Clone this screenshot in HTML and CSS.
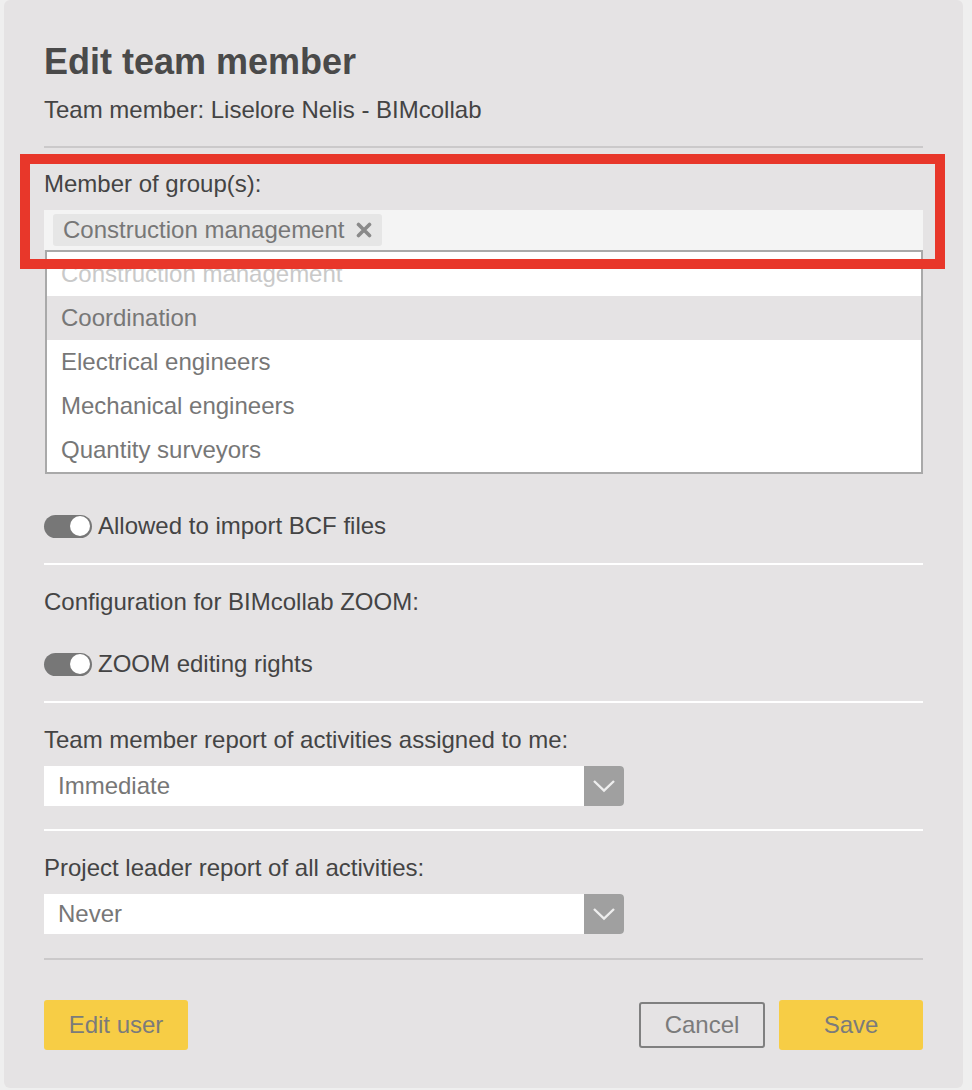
FILE: index.html
```html
<!DOCTYPE html>
<html lang="en">
<head>
  <meta charset="UTF-8" />
  <meta name="viewport" content="width=device-width, initial-scale=1.0"/>
  <title>Edit team member</title>
  <link rel="stylesheet" href="styles.css">
</head>
<body>
  <div class="panel">
    <h1 class="title">Edit team member</h1>
    <div class="subtitle">Team member: Liselore Nelis - BIMcollab</div>
    <div class="divider grey"></div>

    <div class="field-label first">Member of group(s):</div>
    <div class="multi-select">
      <span class="tag">Construction management
        <svg class="tag-remove" width="16" height="16" viewBox="0 0 16 16"><path d="M2.5 2.5 L13.5 13.5 M13.5 2.5 L2.5 13.5" stroke="#8a8a8a" stroke-width="3.6" stroke-linecap="round"/></svg>
      </span>
    </div>
    <ul class="options">
      <li class="option selected">Construction management</li>
      <li class="option hover">Coordination</li>
      <li class="option">Electrical engineers</li>
      <li class="option">Mechanical engineers</li>
      <li class="option">Quantity surveyors</li>
    </ul>

    <label class="toggle-row import-row">
      <span class="toggle"><span class="knob"></span></span>
      Allowed to import BCF files
    </label>
    <div class="divider white"></div>

    <div class="field-label">Configuration for BIMcollab ZOOM:</div>
    <label class="toggle-row zoom-row">
      <span class="toggle"><span class="knob"></span></span>
      ZOOM editing rights
    </label>
    <div class="divider white"></div>

    <div class="field-label">Team member report of activities assigned to me:</div>
    <div class="select">
      <span class="select-value">Immediate</span>
      <span class="select-arrow">
        <svg width="24" height="14" viewBox="0 0 24 14"><path d="M2 2 L12 11.5 L22 2" fill="none" stroke="#eeeeee" stroke-width="2.4"/></svg>
      </span>
    </div>
    <div class="divider white"></div>

    <div class="field-label">Project leader report of all activities:</div>
    <div class="select">
      <span class="select-value">Never</span>
      <span class="select-arrow">
        <svg width="24" height="14" viewBox="0 0 24 14"><path d="M2 2 L12 11.5 L22 2" fill="none" stroke="#eeeeee" stroke-width="2.4"/></svg>
      </span>
    </div>
    <div class="divider grey last"></div>

    <div class="actions">
      <button class="btn yellow edit-btn">Edit user</button>
      <div class="actions-right">
        <button class="btn outline">Cancel</button>
        <button class="btn yellow save-btn">Save</button>
      </div>
    </div>

    <!-- annotation box drawn over the group field -->
    <div class="highlight-box"></div>
  </div>
</body>
</html>
```

FILE: styles.css
```css
body, html {
  margin: 0;
  padding: 0;
  background: #efefef;
  font-family: "Liberation Sans", Arial, Helvetica, sans-serif;
}

.panel {
  position: relative;
  margin-left: 4px;
  width: 959px;
  height: 1088px;
  box-sizing: border-box;
  padding: 42px 40px 0;
  background: #e5e3e4;
  border-radius: 6px;
  color: #444;
}

.title {
  margin: 0;
  font-size: 36px;
  line-height: 40px;
  font-weight: bold;
  color: #4a4a4a;
}

.subtitle {
  margin-top: 14px;
  font-size: 24px;
  line-height: 28px;
}

.divider {
  height: 2px;
  margin-top: 23px;
}

.divider.grey {
  background: #cbc9ca;
  margin-top: 22px;
}

.divider.last {
  margin-top: 24px;
}

.divider.white {
  background: #ffffff;
}

.field-label {
  margin-top: 23px;
  font-size: 24px;
  line-height: 28px;
}

.field-label.first {
  margin-top: 22px;
}

/* multi select */
.multi-select {
  margin-top: 12px;
  height: 40px;
  box-sizing: border-box;
  padding: 4px 9px;
  background: #f4f4f4;
}

.tag {
  display: inline-flex;
  align-items: center;
  height: 32px;
  padding: 0 10px;
  background: #e6e6e6;
  border-radius: 3px;
  font-size: 24px;
  color: #777;
}

.tag-remove {
  margin-left: 12px;
}

.options {
  list-style: none;
  margin: 0 0 0 1px;
  padding: 0;
  border: 2px solid #a9a9a9;
  background: #fff;
}

.option {
  height: 44px;
  line-height: 44px;
  padding-left: 14px;
  font-size: 24px;
  color: #777;
}

.option.selected {
  color: #c9c9c9;
}

.option.hover {
  background: #e5e3e4;
}

/* toggles */
.toggle-row {
  display: flex;
  align-items: center;
  height: 28px;
  font-size: 24px;
  margin-top: 34px;
}

.toggle-row.import-row {
  margin-top: 38px;
}

.toggle {
  position: relative;
  flex: none;
  width: 48px;
  height: 23px;
  margin-right: 6px;
  border-radius: 12px;
  background: #777;
}

.knob {
  position: absolute;
  top: 1.5px;
  right: 2px;
  width: 20px;
  height: 20px;
  border-radius: 50%;
  background: #fff;
}

/* selects */
.select {
  display: flex;
  margin-top: 12px;
  width: 580px;
  height: 40px;
  background: #fff;
  border-radius: 0 4px 4px 0;
}

.select-value {
  flex: 1;
  padding-left: 14px;
  line-height: 40px;
  font-size: 24px;
  color: #777;
}

.select-arrow {
  display: flex;
  align-items: center;
  justify-content: center;
  width: 40px;
  background: #a0a0a0;
  border-radius: 0 4px 4px 0;
}

/* buttons */
.actions {
  display: flex;
  justify-content: space-between;
  align-items: center;
  margin-top: 40px;
}

.actions-right {
  display: flex;
  align-items: center;
  gap: 14px;
}

.btn {
  height: 50px;
  border: none;
  border-radius: 3px;
  font-family: "Liberation Sans", Arial, Helvetica, sans-serif;
  font-size: 24px;
  color: #7b7b7b;
  cursor: pointer;
}

.btn.yellow {
  background: #f7cd45;
}

.edit-btn {
  width: 144px;
}

.save-btn {
  width: 144px;
}

.btn.outline {
  width: 126px;
  height: 46px;
  background: transparent;
  border: 2px solid #808080;
}

.highlight-box {
  position: absolute;
  left: 16px;
  top: 154px;
  width: 925px;
  height: 115px;
  box-sizing: border-box;
  border: 10px solid #e8372a;
  pointer-events: none;
}
```
